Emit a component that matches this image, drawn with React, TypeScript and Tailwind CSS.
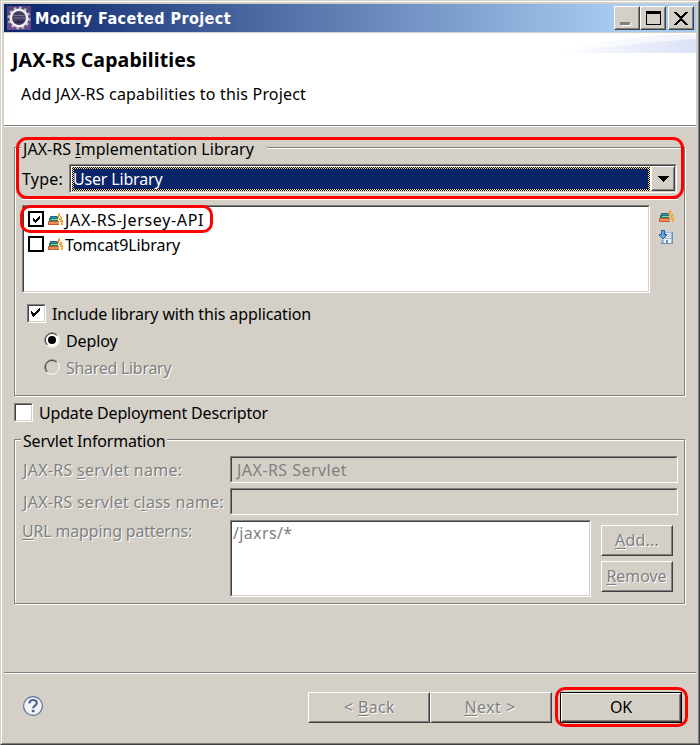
import type { ReactNode } from "react";

const EMBOSS = "text-[#808080] [text-shadow:1px_1px_0_#fff]";
const SUNKEN =
  "border border-t-[#808080] border-l-[#808080] border-r-white border-b-white";
const SUNKEN_INNER =
  "border border-t-[#404040] border-l-[#404040] border-r-[#d4d0c8] border-b-[#d4d0c8]";
const RAISED =
  "border border-t-white border-l-white border-r-[#404040] border-b-[#404040]";
const RAISED_INNER =
  "border border-t-[#d4d0c8] border-l-[#d4d0c8] border-r-[#808080] border-b-[#808080]";

function T({ className = "", children }: { className?: string; children: ReactNode }) {
  return <span className={`block whitespace-pre leading-5 ${className}`}>{children}</span>;
}

function U({ children }: { children: ReactNode }) {
  return <span className="underline decoration-1 underline-offset-2">{children}</span>;
}

function Sunken({ className = "", inner = "", children }: { className?: string; inner?: string; children?: ReactNode }) {
  return (
    <div className={`shrink-0 ${SUNKEN} ${className}`}>
      <div className={`h-full w-full ${SUNKEN_INNER} ${inner}`}>{children}</div>
    </div>
  );
}

function Raised({ className = "", inner = "", children }: { className?: string; inner?: string; children?: ReactNode }) {
  return (
    <div className={`shrink-0 ${RAISED} ${className}`}>
      <div className={`flex h-full w-full items-center justify-center ${RAISED_INNER} ${inner}`}>{children}</div>
    </div>
  );
}

function Group({ className, legend, children }: { className: string; legend: ReactNode; children: ReactNode }) {
  return (
    <section className={`relative shrink-0 border border-[#808080] shadow-[1px_1px_0_#fff,inset_1px_1px_0_#fff] ${className}`}>
      {legend}
      {children}
    </section>
  );
}

function Check() {
  return (
    <svg width="9" height="9" viewBox="0 0 9 9" shapeRendering="crispEdges">
      <path d="M0 3h1v3h-1zM1 4h1v4h-1zM2 5h1v4h-1zM3 5h1v3h-1zM4 4h1v3h-1zM5 3h1v3h-1zM6 2h1v3h-1zM7 1h1v3h-1zM8 0h1v3h-1z" />
    </svg>
  );
}

function SmallCheck() {
  return (
    <svg width="7" height="7" viewBox="0 0 7 7" shapeRendering="crispEdges">
      <path d="M0 2h1v3h-1zM1 3h1v3h-1zM2 4h1v3h-1zM3 3h1v3h-1zM4 2h1v3h-1zM5 1h1v3h-1zM6 0h1v3h-1z" />
    </svg>
  );
}

function Books() {
  return (
    <svg width="16" height="13" viewBox="0 0 16 13" shapeRendering="crispEdges" className="shrink-0">
      <path d="M2 3h8v2H2z" fill="#24659a" />
      <path d="M3 4h6v1H3z" fill="#3f86b5" />
      <path d="M1 5h9v3H1z" fill="#1f7a58" />
      <path d="M3 6h7v1H3z" fill="#8fcfa6" />
      <path d="M0 8h11v4H0z" fill="#c4602e" />
      <path d="M1 9h10v2H1z" fill="#e88f58" />
      <path d="M10 1h1v-1h1v3h-1v2h-1v7h1V5h1V3h1v1h1v3h1v5h-2V9h-1V7h-1v5h-1V4h-1V3h1z" fill="#e99a1f" />
      <path d="M12 3h1v3h1v3h1v3h-1v-2h-1V7h-1z" fill="#f5b945" />
    </svg>
  );
}

function DownloadLibrary() {
  return (
    <svg width="15" height="15" viewBox="0 0 15 15" shapeRendering="crispEdges">
      <path d="M6 2h8v12H2v-4h4z" fill="#9db6d8" />
      <path d="M7 3h5v5H7z" fill="#f1f4f9" />
      <path d="M13 2h1v12H2v-1h11z" fill="#6f8fbd" />
      <path d="M5 9h7v4H5z" fill="#eef3fa" />
      <path d="M7 10h2v3H7z" fill="#6f8fb5" />
      <path d="M8 4h4v1H8zM8 6h4v1H8z" fill="#b9c9df" />
      <path d="M2 0h4v4h2v2H7v1H6v1H5v1H3V8H2V7H1V6H0V4h2z" fill="#2663a8" />
      <path d="M3 1h2v4h2v1H6v1H5v1H3V7H2V6H1V5h2z" fill="#69a5df" />
    </svg>
  );
}

function EclipseGear() {
  return (
    <svg width="24" height="24" viewBox="0 0 24 24">
      <rect width="24" height="24" fill="#54447c" />
      <rect y="16" width="24" height="8" fill="#68488e" />
      <circle cx="12" cy="12" r="10" fill="none" stroke="#b9b5b6" strokeWidth="3" strokeDasharray="2.6 2.6" />
      <circle cx="12" cy="12" r="8.2" fill="#423b62" stroke="#f0efeb" strokeWidth="2.6" />
      <path d="M6 9.5h12M6 12h12" stroke="#74708c" strokeWidth="1" />
      <path d="M7 15h10c-2 3-8 3-10 0z" fill="#302750" />
    </svg>
  );
}

function Radio({ on = false }: { on?: boolean }) {
  return (
    <svg width="16" height="16" viewBox="0 0 16 16" className="shrink-0">
      <circle cx="8" cy="8" r="6.5" fill={on ? "#fff" : "#d4d0c8"} />
      <path d="M2.7 13.3A7.5 7.5 0 0 1 13.3 2.7" fill="none" stroke="#808080" />
      <path d="M13.3 2.7A7.5 7.5 0 0 1 2.7 13.3" fill="none" stroke="#fff" />
      <path d="M3.4 12.6A6.5 6.5 0 0 1 12.6 3.4" fill="none" stroke="#404040" />
      {on && <circle cx="8" cy="8" r="4" fill="#000" />}
    </svg>
  );
}

function LibraryRow({ checked = false, children }: { checked?: boolean; children: ReactNode }) {
  return (
    <div className="flex h-[25px] items-start">
      <div className="mt-[2px] flex h-4 w-4 shrink-0 items-center justify-center border-2 border-black">
        {checked && <SmallCheck />}
      </div>
      <div className="mt-[4px] ml-1">
        <Books />
      </div>
      {children}
    </div>
  );
}

function Highlight({ className }: { className: string }) {
  return <div className={`pointer-events-none absolute border-[3px] border-[#ff0000] ${className}`} />;
}

function TitleBar() {
  return (
    <header className="flex h-7 shrink-0 items-start bg-[linear-gradient(90deg,#0a246a,#a6caf0_88%)] pr-[2px] pl-[3px]">
      <div className="mt-[2px] w-[28px]">
        <EclipseGear />
      </div>
      <T className="mt-[5px] font-['DejaVu_Sans_Condensed','DejaVu_Sans',sans-serif] font-bold tracking-[0.43px] text-white">
        Modify Faceted Project
      </T>
      <div className="mt-[2px] ml-auto flex">
        <Raised className="h-6 w-[26px] bg-[#d4d0c8]">
          <div className="mt-[11px] mr-[4px] h-[3px] w-[10px] bg-[#808080] shadow-[1px_1px_0_#fff]" />
        </Raised>
        <Raised className="h-6 w-[26px] bg-[#d4d0c8]">
          <div className="h-[14px] w-[15px] border border-t-[3px] border-black" />
        </Raised>
        <Raised className="ml-[2px] h-6 w-[26px] bg-[#d4d0c8]">
          <svg width="14" height="13" viewBox="0 0 14 13" shapeRendering="crispEdges" className="mt-px mr-px">
            <path d="M0 0h3v1h1v1h1v1h1v1h2v-1h1v-1h1v-1h1v-1h3v1h-1v1h-1v1h-1v1h-1v1h-1v1h-1v1h1v1h1v1h1v1h1v1h1v1h1v1h-3v-1h-1v-1h-1v-1h-1v-1h-2v1h-1v1h-1v1h-1v1h-3v-1h1v-1h1v-1h1v-1h1v-1h1v-1h1v-1h-1v-1h-1v-1h-1v-1h-1v-1h-1v-1h-1z" />
          </svg>
        </Raised>
      </div>
    </header>
  );
}

function Banner() {
  return (
    <div className="mt-px flex h-[92px] shrink-0 items-start justify-between bg-white">
      <div className="pt-[14px]">
        <T className="ml-[8px] text-[19.5px] leading-[26px]! font-bold tracking-[0.12px]">JAX-RS Capabilities</T>
        <T className="mt-[11px] ml-[17px] tracking-[0.18px]">Add JAX-RS capabilities to this Project</T>
      </div>
      <svg width="140" height="20" viewBox="0 0 140 20">
        <defs>
          <linearGradient id="swoosh">
            <stop offset="0" stopColor="#fff" />
            <stop offset="1" stopColor="#dbe2f7" />
          </linearGradient>
        </defs>
        <path d="M0 20Q60 2 140 1V20z" fill="url(#swoosh)" opacity="0.4" />
        <path d="M0 20Q80 10 140 6V20z" fill="url(#swoosh)" />
      </svg>
    </div>
  );
}

function LibraryGroup() {
  return (
    <Group
      className="h-[249px]"
      legend={
        <div className="-mt-[9px] ml-[6px] flex h-5 w-[246px] bg-[#d4d0c8] pl-[2px]">
          <T className="tracking-[0.03px]">
            JAX-RS <U>I</U>mplementation Library
          </T>
        </div>
      }
    >
      <div className="mt-[5px] ml-[7px] flex h-[29px] w-[655px]">
        <T className="mt-[5px] w-[47px] tracking-[0.22px]">Type:</T>
        <Sunken className="h-[29px] w-[608px]" inner="flex bg-white pt-px pl-px">
          <div className="h-[24px] w-[580px] bg-[repeating-conic-gradient(#000_0_25%,#f5db95_0_50%)] bg-[length:2px_2px] p-[2px]">
            <div className="h-full bg-[#0a246a]">
              <T className="-ml-px tracking-[-0.18px] text-white">User Library</T>
            </div>
          </div>
          <Raised className="-mt-px ml-px h-[25px] w-6 bg-[#d4d0c8]">
            <svg width="11" height="6" viewBox="0 0 11 6" shapeRendering="crispEdges">
              <path d="M0 0h11v1h-1v1h-1v1h-1v1h-1v1h-1v1h-1v-1h-1v-1h-1v-1h-1v-1h-1v-1h-1z" />
            </svg>
          </Raised>
        </Sunken>
      </div>
      <div className="mt-[5px] ml-[7px] h-[2px] w-[656px] border-t border-b border-t-[#808080] border-b-white" />
      <div className="mt-[5px] ml-[7px] flex">
        <Sunken className="h-[88px] w-[628px]" inner="bg-white pt-[2px] pl-1">
          <LibraryRow checked>
            <T className="mt-px ml-px tracking-[0.65px]">JAX-RS-Jersey-API</T>
          </LibraryRow>
          <LibraryRow>
            <T className="mt-px ml-px tracking-[-0.1px]">Tomcat9Library</T>
          </LibraryRow>
        </Sunken>
        <div className="mt-[5px] ml-[9px] flex flex-col gap-[7px]">
          <Books />
          <DownloadLibrary />
        </div>
      </div>
      <div className="mt-[11px] ml-3 flex h-[19px]">
        <Sunken className="h-[19px] w-[19px]" inner="flex bg-white pt-[2px] pl-[2px]">
          <Check />
        </Sunken>
        <T className="ml-[6px] tracking-[-0.12px]">Include library with this application</T>
      </div>
      <div className="mt-[9px] ml-[29px] flex h-4">
        <Radio on />
        <T className="-mt-px ml-[6px] tracking-[-0.1px]">Deploy</T>
      </div>
      <div className="mt-[11px] ml-[29px] flex h-4">
        <Radio />
        <T className={`-mt-px ml-[6px] tracking-[-0.29px] ${EMBOSS}`}>Shared Library</T>
      </div>
      <Highlight className="top-[-11px] left-px h-[62px] w-[668px] rounded-[11px]" />
      <Highlight className="top-[57px] left-[5px] h-[28px] w-[193px] rounded-[10px]" />
    </Group>
  );
}

function ServletGroup() {
  return (
    <Group
      className="mt-[17px] h-[165px]"
      legend={
        <div className="-mt-[9px] ml-[6px] flex h-5 w-[146px] bg-[#d4d0c8] pl-[2px]">
          <T className="tracking-[-0.2px]">Servlet Information</T>
        </div>
      }
    >
      <div className={`mt-[5px] ml-[7px] flex h-8 ${EMBOSS}`}>
        <T className="mt-[4px] w-[208px] pl-px tracking-[0.28px]">
          JAX-RS <U>s</U>ervlet name:
        </T>
        <Sunken className="h-[27px] w-[448px]" inner="pt-[2px] pl-[5px] [text-shadow:none]">
          <T className="tracking-[0.46px]">JAX-RS Servlet</T>
        </Sunken>
      </div>
      <div className={`ml-[7px] flex h-8 ${EMBOSS}`}>
        <T className="mt-[4px] w-[208px] pl-px tracking-[0.27px]">
          JAX-RS servlet c<U>l</U>ass name:
        </T>
        <Sunken className="h-[27px] w-[448px]" />
      </div>
      <div className={`ml-[7px] flex ${EMBOSS}`}>
        <T className="mt-px w-[208px] tracking-[-0.17px]">
          <U>U</U>RL mapping patterns:
        </T>
        <Sunken className="h-[77px] w-[361px]" inner="bg-white pt-px pl-px [text-shadow:none]">
          <T className="tracking-[0.35px]">/jaxrs/*</T>
        </Sunken>
        <div className="mt-[5px] ml-[10px] flex flex-col gap-[5px]">
          <Raised className="h-[31px] w-[72px]" inner="pb-[2px]">
            <T className="tracking-[0.2px]">
              <U>A</U>dd...
            </T>
          </Raised>
          <Raised className="h-[31px] w-[72px]" inner="pb-[2px]">
            <T className="-ml-px tracking-[-0.05px]">
              <U>R</U>emove
            </T>
          </Raised>
        </div>
      </div>
    </Group>
  );
}

function Footer() {
  return (
    <footer className="relative flex h-[71px] shrink-0 items-start border-t border-[#808080] shadow-[inset_0_1px_0_#fff]">
      <svg width="22" height="22" viewBox="0 0 22 22" className="mt-[22px] ml-[18px]">
        <circle cx="11" cy="11" r="9.4" fill="#f2f4f6" stroke="#596f9a" strokeWidth="1.2" />
        <path
          d="M7.4 8.6C7.4 6 9 5 11.1 5c2.2 0 3.7 1.2 3.7 3 0 2.5-3.6 2.7-3.6 5.2"
          fill="none"
          stroke="#4d6493"
          strokeWidth="2.2"
        />
        <rect x="9.8" y="14.8" width="2.8" height="2.5" rx="0.8" fill="#4d6493" />
      </svg>
      <div className="mt-[19px] ml-[264px] flex">
        <Raised className={`h-[31px] w-[122px] ${EMBOSS}`} inner="pb-[2px]">
          <T className="ml-px tracking-[0.35px]">
            {"< "}
            <U>B</U>ack
          </T>
        </Raised>
        <Raised className={`h-[31px] w-[122px] ${EMBOSS}`} inner="pb-[2px]">
          <T className="-ml-[2px] tracking-[0.43px]">
            <U>N</U>ext {">"}
          </T>
        </Raised>
        <div className="ml-2 h-[31px] w-[122px] border border-black">
          <Raised className="h-full w-full" inner="pb-[2px]">
            <T className="tracking-[-0.1px]">OK</T>
          </Raised>
        </div>
      </div>
      <Highlight className="top-[14px] left-[551px] h-10 w-[133px] rounded-[10px]" />
    </footer>
  );
}

export default function App() {
  return (
    <div className="h-[745px] w-[700px] overflow-hidden border border-t-[#d4d0c8] border-r-[#404040] border-b-[#404040] border-l-[#d4d0c8] bg-[#d4d0c8] font-['Noto_Sans','Open_Sans',sans-serif] text-[16px] text-black">
      <div className="flex h-full flex-col border border-t-white border-r-[#808080] border-b-[#808080] border-l-white px-[2px] pt-[2px]">
        <TitleBar />
        <Banner />
        <main className="flex h-[547px] shrink-0 flex-col border-t border-[#808080] pr-[11px] pl-[10px] shadow-[inset_0_1px_0_#fff]">
          <div className="h-[21px] shrink-0" />
          <LibraryGroup />
          <div className="mt-[7px] flex h-[19px] shrink-0">
            <Sunken className="h-[19px] w-[19px]" inner="bg-white" />
            <T className="ml-[6px] tracking-[-0.18px]">Update Deployment Descriptor</T>
          </div>
          <ServletGroup />
        </main>
        <Footer />
      </div>
    </div>
  );
}
